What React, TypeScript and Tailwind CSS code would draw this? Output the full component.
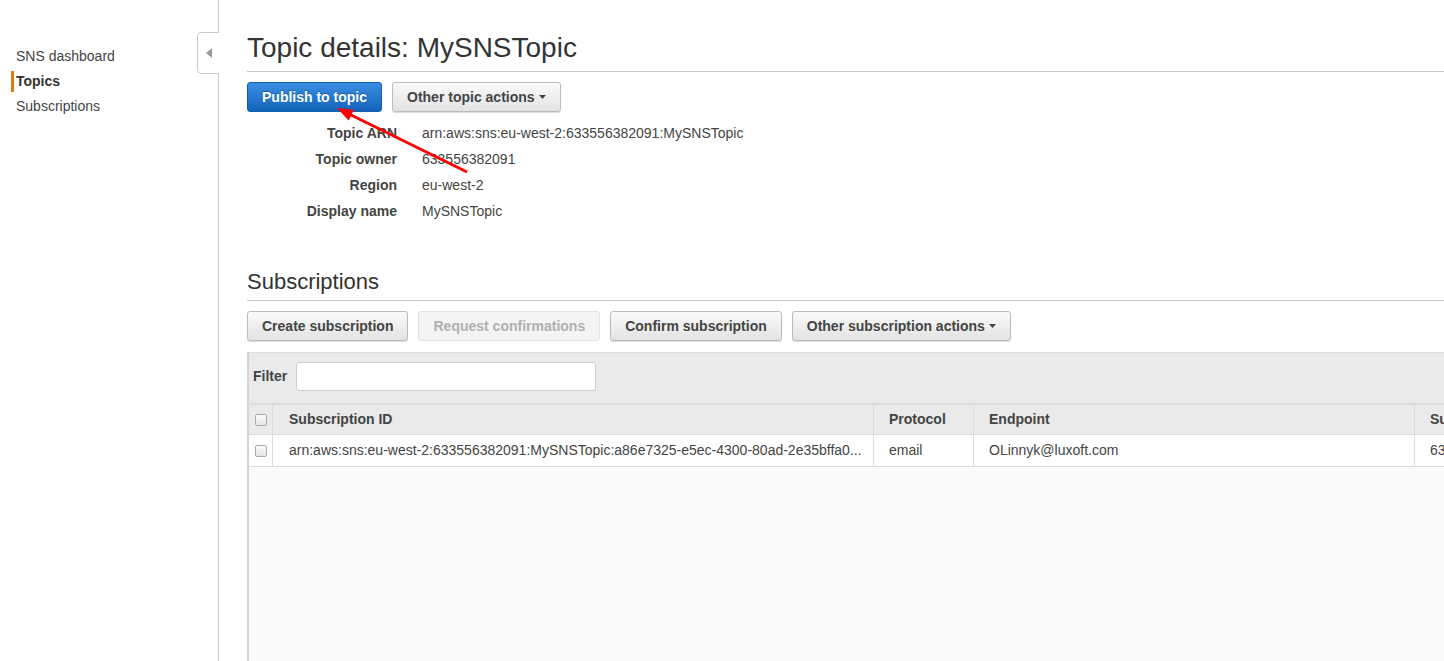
import React from 'react';

const navItems = [
  { label: 'SNS dashboard', active: false },
  { label: 'Topics', active: true },
  { label: 'Subscriptions', active: false },
];

const details = [
  { label: 'Topic ARN', value: 'arn:aws:sns:eu-west-2:633556382091:MySNSTopic' },
  { label: 'Topic owner', value: '633556382091' },
  { label: 'Region', value: 'eu-west-2' },
  { label: 'Display name', value: 'MySNSTopic' },
];

function Caret() {
  return (
    <svg width="7" height="4" viewBox="0 0 7 4" className="ml-[4px] inline-block">
      <path d="M0 0h7L3.5 4z" fill="#444" />
    </svg>
  );
}

function Button({ children, disabled, caret }: { children: React.ReactNode; disabled?: boolean; caret?: boolean }) {
  if (disabled) {
    return (
      <button className="h-[30px] px-[14px] border border-[#e1e1e1] rounded-[3px] bg-[#f4f4f4] text-[14px] font-bold text-[#b0b0b0]">
        {children}
      </button>
    );
  }
  return (
    <button className="h-[30px] px-[14px] border border-[#bbb] rounded-[3px] bg-linear-to-b from-[#fafafa] to-[#e3e3e3] text-[14px] font-bold text-[#444] flex items-center shadow-[0_1px_1px_rgba(0,0,0,0.15)]">
      {children}
      {caret && <Caret />}
    </button>
  );
}

function Checkbox() {
  return <span className="block w-[12px] h-[12px] rounded-[2px] border border-[#a9a9a9] bg-linear-to-b from-[#fdfdfd] to-[#e4e4e4]" />;
}

export default function App() {
  return (
    <div className="relative flex h-[661px] overflow-hidden bg-white text-[#444] font-['Liberation_Sans',Arial,sans-serif]">
      {/* Sidebar */}
      <aside className="relative w-[219px] shrink-0 border-r border-[#ccc] pt-[46px] text-[14px] flex flex-col gap-[4px]">
        {navItems.map(item => (
          <div
            key={item.label}
            className={`ml-[11px] pl-[2px] leading-[21px] border-l-[3px] ${item.active ? 'border-[#e47911] font-bold text-[#333]' : 'border-transparent'}`}
          >
            {item.label}
          </div>
        ))}
        <div className="absolute right-[-1px] top-[32px] w-[22px] h-[42px] border border-r-0 border-[#ccc] rounded-l-[5px] bg-white flex items-center justify-center">
          <svg width="6" height="10" viewBox="0 0 6 10">
            <path d="M6 0v10L0 5z" fill="#999" />
          </svg>
        </div>
      </aside>

      {/* Main */}
      <main className="flex-1 min-w-0 flex flex-col pl-[28px] pt-[31px]">
        <h1 className="text-[28px] leading-[34px] pb-[6px] border-b border-[#ccc] text-[#333]">Topic details: MySNSTopic</h1>

        <div className="flex gap-[10px] mt-[10px]">
          <button className="h-[30px] px-[14px] border border-[#135fad] rounded-[3px] bg-linear-to-b from-[#3a8fe3] to-[#1163b9] text-[14px] font-bold text-white [text-shadow:0_-1px_0_rgba(0,0,0,0.3)]">
            Publish to topic
          </button>
          <Button caret>Other topic actions</Button>
        </div>

        <div className="mt-[8px] text-[14px]">
          {details.map(d => (
            <div key={d.label} className="flex leading-[26px]">
              <div className="w-[150px] text-right font-bold">{d.label}</div>
              <div className="ml-[25px]">{d.value}</div>
            </div>
          ))}
        </div>

        <h2 className="mt-[45px] text-[22px] leading-[26px] pb-[5px] border-b border-[#ccc] text-[#333]">Subscriptions</h2>

        <div className="flex gap-[10px] mt-[10px]">
          <Button>Create subscription</Button>
          <Button disabled>Request confirmations</Button>
          <Button>Confirm subscription</Button>
          <Button caret>Other subscription actions</Button>
        </div>

        {/* Table block */}
        <div className="mt-[11px] flex-1 flex flex-col w-[1400px] border-l-2 border-[#d4d4d4] text-[14px]">
          <div className="h-[51px] bg-[#eaeaea] border-t border-[#ddd] flex items-center gap-[7px] pl-[4px] pb-[4px]">
            <span className="font-bold">Filter</span>
            <input className="ml-[2px] w-[300px] h-[29px] rounded-[3px] border border-[#ccc] bg-white" />
          </div>
          <div className="grid grid-cols-[24px_601px_100px_441px_234px] h-[32px] bg-[#eaeaea] border-t-2 border-b border-[#dcdcdc] font-bold">
            <div className="flex items-center justify-center border-r border-[#dcdcdc]"><Checkbox /></div>
            <div className="flex items-center pl-[16px] border-r border-[#dcdcdc]">Subscription ID</div>
            <div className="flex items-center pl-[15px] border-r border-[#dcdcdc]">Protocol</div>
            <div className="flex items-center pl-[15px] border-r border-[#dcdcdc]">Endpoint</div>
            <div className="flex items-center pl-[15px]">Su</div>
          </div>
          <div className="grid grid-cols-[24px_601px_100px_441px_234px] h-[32px] bg-white border-b border-[#dcdcdc]">
            <div className="flex items-center justify-center border-r border-[#dcdcdc]"><Checkbox /></div>
            <div className="flex items-center pl-[16px] border-r border-[#dcdcdc] whitespace-nowrap">
              arn:aws:sns:eu-west-2:633556382091:MySNSTopic:a86e7325-e5ec-4300-80ad-2e35bffa0...
            </div>
            <div className="flex items-center pl-[15px] border-r border-[#dcdcdc]">email</div>
            <div className="flex items-center pl-[15px] border-r border-[#dcdcdc]">OLinnyk@luxoft.com</div>
            <div className="flex items-center pl-[15px]">63</div>
          </div>
          <div className="flex-1 bg-[#fafafa]" />
        </div>
      </main>

      {/* Annotation arrow */}
      <svg className="absolute left-0 top-0 pointer-events-none" width="1444" height="661">
        <line x1="467" y1="172" x2="350" y2="114.5" stroke="#f00" strokeWidth="3" />
        <path d="M337 108L354 109.7L348.7 120.4z" fill="#f00" />
      </svg>
    </div>
  );
}
